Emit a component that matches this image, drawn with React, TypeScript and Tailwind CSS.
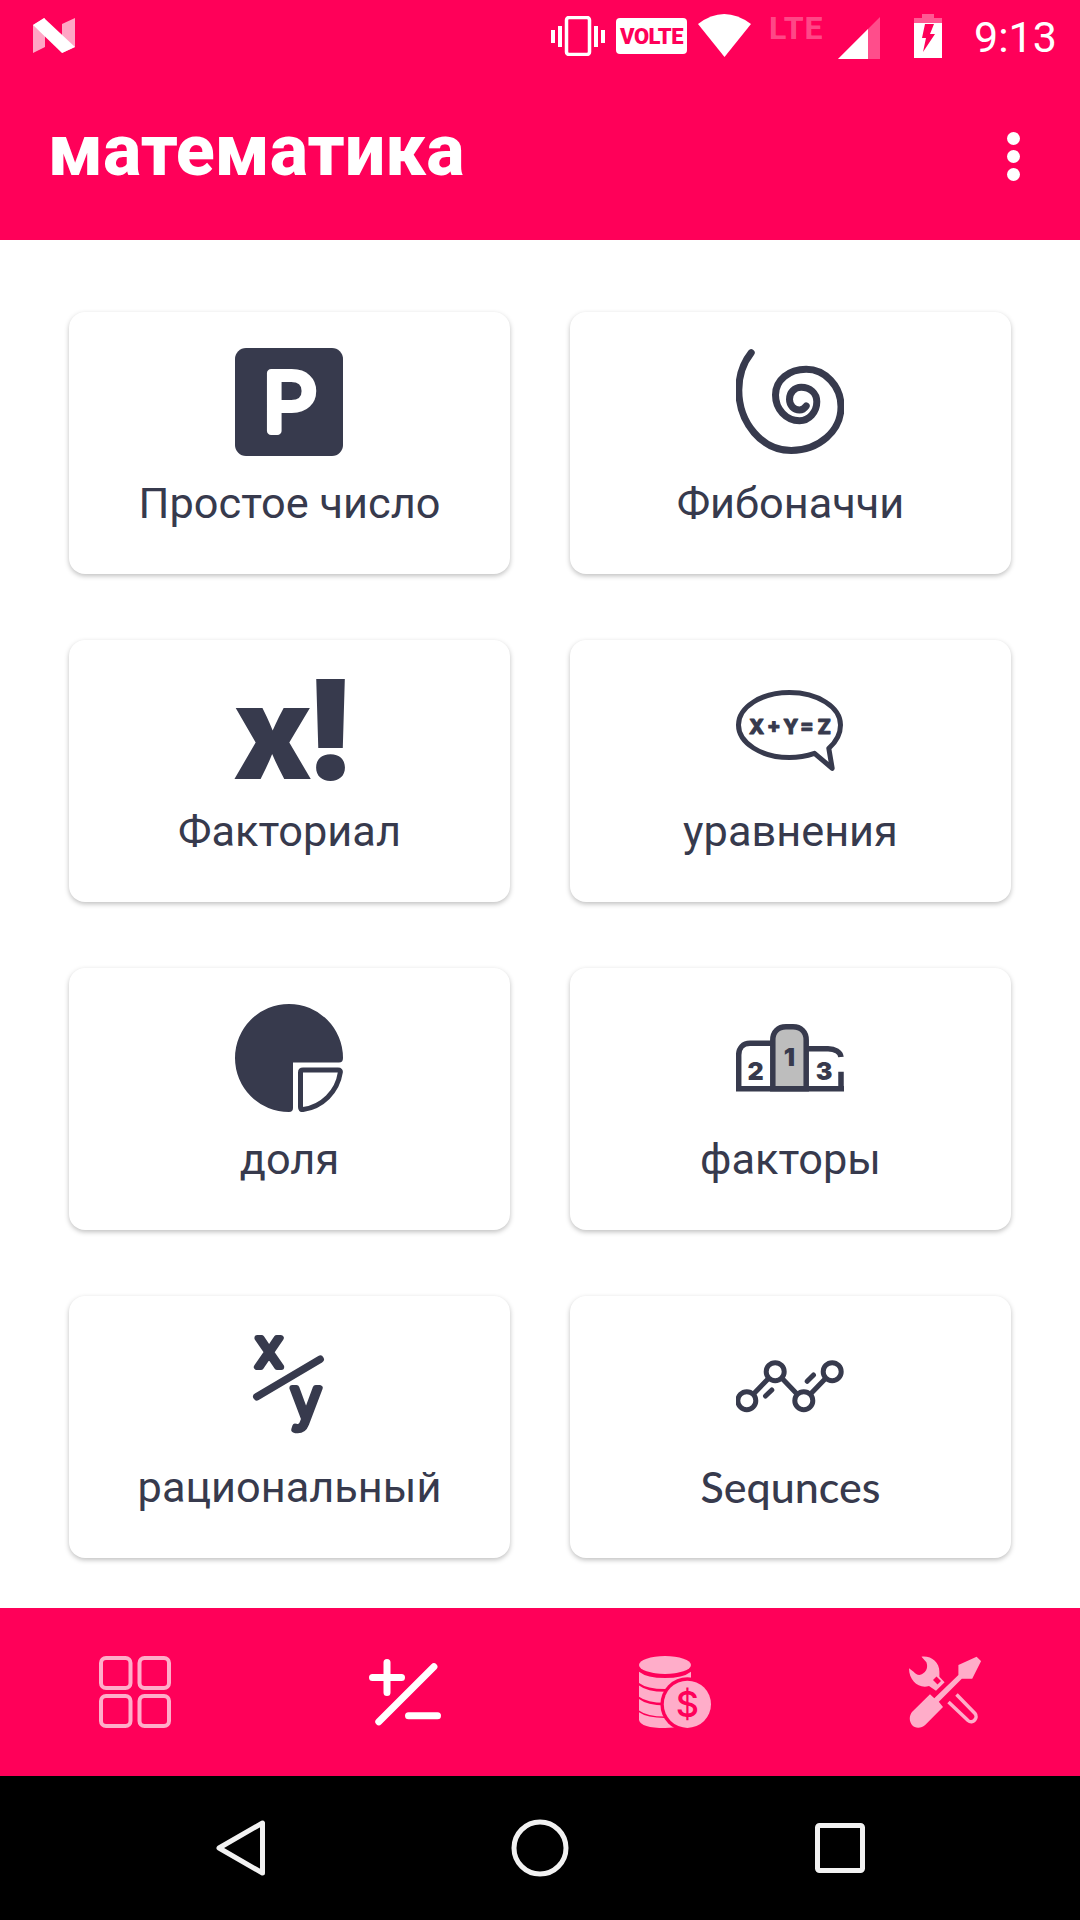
import React from 'react';

const INK = '#373a4d';
const TINT = '#ffadc9';
const PINK = '#ff0059';

function PrimeIcon() {
  return (
    <svg width="108" height="108" viewBox="0 0 108 108" className="overflow-visible">
      <rect width="108" height="108" rx="11" fill={INK} />
      <text x="28" y="83" textLength="54" lengthAdjust="spacingAndGlyphs" fontFamily="Inter" fontWeight="300" fontSize="80" fill="#fff" stroke="#fff" strokeWidth="8" strokeLinejoin="round">P</text>
    </svg>
  );
}

function SpiralIcon() {
  return (
    <svg width="108" height="108" viewBox="0 0 108 108" fill="none">
      <path
        d="M15.2 4.7C7 15 2.8 28 2.8 42C2.8 75 26 102.5 55.2 102.5C83 102.5 105 83 105 58.7C105 38 89 21.3 70.2 21.3C53 21.3 39.5 32 39.5 47C39.5 61 50 72.7 63.5 72.7C73 72.7 80.8 64 80.8 53.7C80.8 45 74 39.3 65.2 39.3C58.5 39.3 53.5 44.5 53.5 51.3C53.5 57.5 58 62 63.5 62C66 62 68.5 60.5 70.2 58"
        stroke={INK}
        strokeWidth="7"
        strokeLinecap="round"
      />
    </svg>
  );
}

function FactorialIcon() {
  return (
    <svg width="108" height="108" viewBox="0 0 108 108" className="overflow-visible">
      <text x="-2" y="103" fontFamily="Inter" fontWeight="900" fill={INK}>
        <tspan fontSize="130">x</tspan>
        <tspan fontSize="138" dx="-8">!</tspan>
      </text>
    </svg>
  );
}

function EquationIcon() {
  return (
    <svg width="108" height="108" viewBox="0 0 108 108" fill="none" className="overflow-visible">
      <path
        d="M78.5 77.3L96.2 92.3L92.8 72.3C100 66 104.5 58 104.5 49C104.5 31 81.5 16.5 53.5 16.5C25.5 16.5 2.5 31 2.5 49C2.5 67 25.5 81.5 53.5 81.5C62 81.5 70.5 80 78.5 77.3Z"
        stroke={INK}
        strokeWidth="5"
        strokeLinejoin="round"
      />
      <text x="13" y="57.5" textLength="82" lengthAdjust="spacing" fontFamily="Inter" fontWeight="800" fontSize="20" fill={INK} stroke={INK} strokeWidth="1" strokeLinejoin="round">X+Y=Z</text>
    </svg>
  );
}

function FractionIcon() {
  return (
    <svg width="108" height="108" viewBox="0 0 108 108" fill="none">
      <path d="M58 58.5H104Q108 58.5 108 54A54 54 0 1 0 54 108Q58 108 58 104Z" fill={INK} />
      <path d="M68 66H103Q105.8 66 105.3 68.5A44 44 0 0 1 68 105.5Q65.5 106 65.5 103V68.5Q65.5 66 68 66Z" stroke={INK} strokeWidth="5" />
    </svg>
  );
}

function PodiumIcon() {
  const num = { fontFamily: 'Inter', fontWeight: 900, fontSize: 25, fill: INK, textAnchor: 'middle' as const };
  return (
    <svg width="108" height="108" viewBox="0 0 108 108" fill="none">
      <path d="M36.8 84.7V36C36.8 28 42 22.7 50 22.7H57C65 22.7 70.2 28 70.2 36V84.7Z" fill="#bdbdbd" stroke={INK} strokeWidth="5.5" />
      <path d="M2.7 84.7V51C2.7 44 7 39.3 14 39.3H36.8" stroke={INK} strokeWidth="5.5" />
      <path d="M70.2 44.7H92C99 44.7 104.5 48 105 53M105 67.7V84.7" stroke={INK} strokeWidth="5.5" />
      <path d="M0 84.7H108" stroke={INK} strokeWidth="5.5" />
      <text x="19.5" y="76" {...num}>2</text>
      <text x="53.5" y="62" {...num}>1</text>
      <text x="88" y="76" {...num}>3</text>
    </svg>
  );
}

function RationalIcon() {
  const letter = { textAnchor: 'middle' as const, fontFamily: 'Inter', fontWeight: 300, fill: INK, stroke: INK, strokeWidth: 6, strokeLinejoin: 'round' as const };
  return (
    <svg width="108" height="108" viewBox="0 0 108 108" fill="none" className="overflow-visible">
      <text x="34" y="35" fontSize="52" {...letter}>x</text>
      <path d="M21.8 64.7L85.2 27.3" stroke={INK} strokeWidth="7.5" strokeLinecap="round" />
      <text x="71" y="87" fontSize="56" {...letter}>y</text>
    </svg>
  );
}

function SequenceIcon() {
  return (
    <svg width="108" height="108" viewBox="0 0 108 108" fill="none" stroke={INK} strokeWidth="5" strokeLinecap="round">
      <circle cx="10.8" cy="68.7" r="9" />
      <circle cx="39.2" cy="39.7" r="9" />
      <circle cx="67.8" cy="68.7" r="9" />
      <circle cx="96.2" cy="39.7" r="9" />
      <path d="M17.5 62L32.5 46.5M45.7 46L61 62M74.5 62L89.5 46.5" strokeLinecap="butt" />
      <path d="M29.5 64L35.8 58M71.2 49.3L77.5 43" />
    </svg>
  );
}

const tiles = [
  { label: 'Простое число', icon: <PrimeIcon /> },
  { label: 'Фибоначчи', icon: <SpiralIcon /> },
  { label: 'Факториал', icon: <FactorialIcon /> },
  { label: 'уравнения', icon: <EquationIcon /> },
  { label: 'доля', icon: <FractionIcon /> },
  { label: 'факторы', icon: <PodiumIcon /> },
  { label: 'рациональный', icon: <RationalIcon /> },
  { label: 'Sequnces', icon: <SequenceIcon /> },
];

function StatusBar() {
  return (
    <div className="flex h-[72px] items-start justify-between pl-[33px] pr-[25px]">
      <svg className="mt-[18px]" width="42" height="35" viewBox="0 0 42 35" fill="#fff">
        <path d="M0 7L12 0V29L0 35Z" fillOpacity="0.65" />
        <path d="M29 6L42 0V29L29 35Z" fillOpacity="0.65" />
        <path d="M0 7L11 0L42 29L29 35Z" />
      </svg>
      <div className="flex items-start">
        <svg className="mt-[16px]" width="54" height="40" viewBox="0 0 54 40" fill="none">
          <rect x="15.5" y="1.5" width="23" height="37" rx="2.5" stroke="#fff" strokeWidth="3.5" />
          <path d="M0 14H4V27H0ZM7 10H11V31H7ZM43 10H47V31H43ZM50 14H54V27H50Z" fill="#fff" />
        </svg>
        <div className="ml-[11px] mt-[18px] flex h-[36px] w-[71px] items-center justify-center rounded-[4px] bg-white text-[22px] font-black tracking-[-0.5px] text-[#ff0059]">
          VOLTE
        </div>
        <svg className="ml-[11px] mt-[14px]" width="53" height="43" viewBox="0 0 53 43">
          <path d="M0 10Q26 -10 53 10L26.5 43Z" fill="#fff" />
        </svg>
        <span className="ml-[18px] mt-[8px] w-[54px] text-[32px] leading-[40px] font-bold tracking-[1px] text-white/30">LTE</span>
        <svg className="ml-[15px] mt-[17px]" width="42" height="42" viewBox="0 0 42 42">
          <path d="M0 42L42 0V42Z" fill="#fff" fillOpacity="0.3" />
          <path d="M0 42L30 12V42Z" fill="#fff" />
        </svg>
        <svg className="ml-[34px] mt-[14px]" width="28" height="44" viewBox="0 0 28 44">
          <path d="M8 0H20V4H28V9H0V4H8Z" fill="#fff" fillOpacity="0.35" />
          <path d="M0 9H28V44H0Z" fill="#fff" />
          <path d="M11 10H20L16 20H21L9 38L12 24H8Z" fill={PINK} />
        </svg>
        <span className="ml-[32px] mt-[13px] w-[81px] text-[43px] leading-[49px] text-white">9:13</span>
      </div>
    </div>
  );
}

function BottomBar() {
  return (
    <nav className="grid h-[168px] grid-cols-4 items-center justify-items-center bg-[#ff0059]">
      <svg width="72" height="72" viewBox="0 0 72 72" fill="none" stroke={TINT} strokeWidth="4">
        <rect x="2" y="2" width="29.5" height="30" rx="5" />
        <rect x="40.5" y="2" width="29.5" height="30" rx="5" />
        <rect x="2" y="40" width="29.5" height="30" rx="5" />
        <rect x="40.5" y="40" width="29.5" height="30" rx="5" />
      </svg>
      <svg width="72" height="72" viewBox="0 0 72 72" fill="none" stroke="#fff" strokeWidth="7" strokeLinecap="round">
        <path d="M3.5 21.5H32.5M18 6.5V36.5" />
        <path d="M9.8 65.7L64.9 10.7" />
        <path d="M39.5 59.7H68.5" />
      </svg>
      <svg width="72" height="72" viewBox="0 0 72 72" fill={TINT}>
        <ellipse cx="26" cy="9" rx="26" ry="9" />
        <path d="M0 15.7Q8 22 26 22Q44 22 52 15.7V27Q44 33 26 33Q8 33 0 27Z" />
        <path transform="translate(0 13.7)" d="M0 15.7Q8 22 26 22Q44 22 52 15.7V27Q44 33 26 33Q8 33 0 27Z" />
        <path transform="translate(0 27.4)" d="M0 15.7Q8 22 26 22Q44 22 52 15.7V27Q44 33 26 33Q8 33 0 27Z" />
        <path d="M0 56.3Q8 62 26 62Q44 62 52 56.3V64Q44 72 26 72Q2 72 0 64Z" />
        <circle cx="48.4" cy="48.3" r="27" fill={PINK} />
        <circle cx="48.4" cy="48.3" r="23.6" />
        <text x="48.4" y="61" textAnchor="middle" fontFamily="Inter" fontWeight="500" fontSize="36" fill={PINK}>$</text>
      </svg>
      <svg width="72" height="72" viewBox="0 0 72 72" fill={TINT}>
        <path d="M49.4 9L67.6 0.7L72.1 5L63.2 22.7H52.8L29.8 45.7L34 51L16.7 68.5C12 73 6 72.5 3 69C0 65 0 60 3 56L21 38.3L25.3 42.3L49.4 19Z" />
        <path d="M12.5 0.7C22 -0.5 30.4 6 30.4 15.7V20.7L35.6 26.3L27 34.7L20 30C10 33 0 25 0 12.3L4.6 15.7C7 19 11 20 14 17.5C18 15 19 10.5 17.4 6.3Z" />
        <path d="M24 24L27.5 20.5L32 25L28.5 28.5Z" fill={PINK} />
        <path d="M47.5 38.5L66 57.5C69.5 61.5 64 68.5 59 64.5L39.5 46" fill="none" stroke={TINT} strokeWidth="3.5" />
      </svg>
    </nav>
  );
}

function SystemNav() {
  return (
    <div className="flex h-[144px] items-center justify-between bg-black pl-[216px] pr-[215px]">
      <svg width="49" height="56" viewBox="0 0 49 56" fill="none" stroke="#f2f2f2" strokeWidth="5" strokeLinejoin="round">
        <path d="M46.5 3V53L3 28Z" />
      </svg>
      <svg width="58" height="58" viewBox="0 0 58 58" fill="none" stroke="#f2f2f2" strokeWidth="5">
        <circle cx="29" cy="29" r="26" />
      </svg>
      <svg width="50" height="50" viewBox="0 0 50 50" fill="none" stroke="#f2f2f2" strokeWidth="5">
        <rect x="2.5" y="2.5" width="45" height="45" rx="2" />
      </svg>
    </div>
  );
}

export default function App() {
  return (
    <div className="flex h-[1920px] w-[1080px] flex-col overflow-hidden bg-white font-['Roboto',sans-serif]">
      <header className="h-[240px] bg-[#ff0059]">
        <StatusBar />
        <div className="flex h-[168px] items-center justify-between pl-[48px] pr-[60px]">
          <h1 className="pb-[10px] text-[72px] leading-[80px] font-extrabold text-white">математика</h1>
          <div className="flex flex-col gap-[5px]">
            <span className="size-[13px] rounded-full bg-white" />
            <span className="size-[13px] rounded-full bg-white" />
            <span className="size-[13px] rounded-full bg-white" />
          </div>
        </div>
      </header>

      <main className="grid flex-1 grid-cols-2 content-start gap-x-[60px] gap-y-[66px] px-[69px] pt-[72px]">
        {tiles.map((t) => (
          <div
            key={t.label}
            className="flex h-[262px] flex-col items-center rounded-[16px] bg-white pt-[36px] shadow-[0_2px_5px_rgba(0,0,0,0.25)]"
          >
            <div className="mr-px">{t.icon}</div>
            <span
              className={
                t.label === 'Sequnces'
                  ? "mt-[21px] font-['Lato',sans-serif] text-[43px] leading-[51px] font-medium text-[#373a4d]"
                  : 'mt-[22px] text-[43.3px] leading-[51px] text-[#373a4d]'
              }
            >
              {t.label}
            </span>
          </div>
        ))}
      </main>

      <BottomBar />
      <SystemNav />
    </div>
  );
}
